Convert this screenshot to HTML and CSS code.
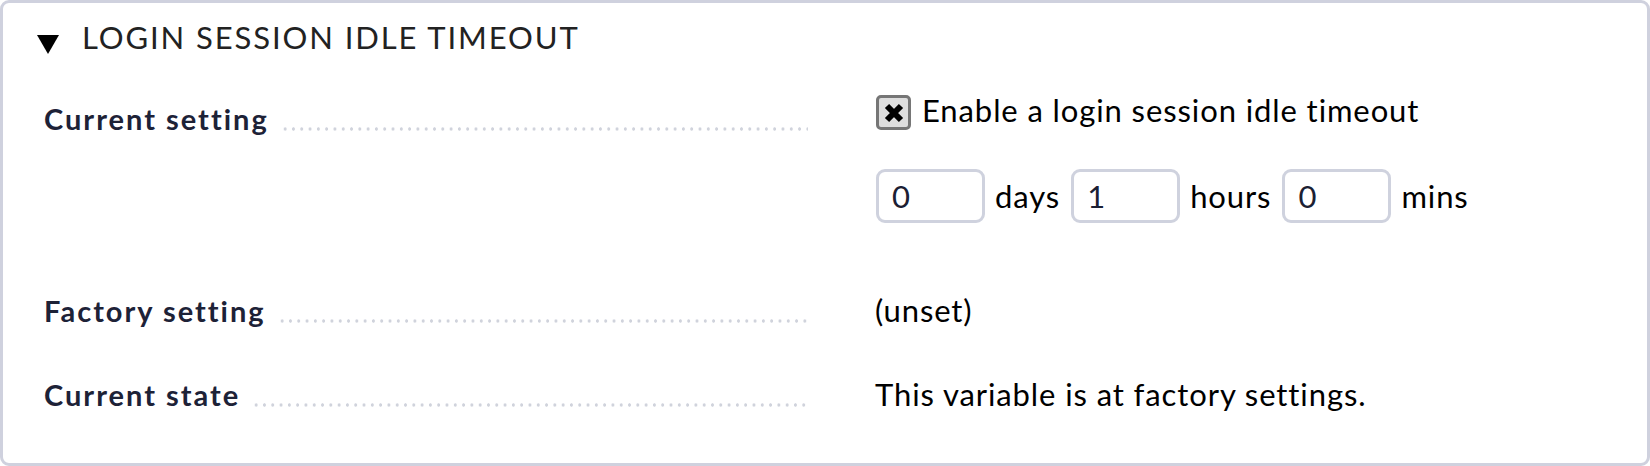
FILE: index.html
```html
<!DOCTYPE html>
<html lang="en">
<head>
<meta charset="utf-8">
<title>Login session idle timeout</title>
<link rel="stylesheet" href="styles.css">
</head>
<body>
<div class="box">
  <div class="head">
    <span class="tri"></span>
    <h2 class="title">LOGIN SESSION IDLE TIMEOUT</h2>
  </div>
  <div class="row row-current">
    <div class="label"><span class="ltext">Current setting</span><span class="dots"></span></div>
    <div class="value">
      <div class="check-line">
        <span class="checkbox"><svg width="22" height="22" viewBox="0 0 22 22"><path d="M4 4 L18 18 M18 4 L4 18" stroke="#000" stroke-width="6" stroke-linecap="butt"/></svg></span>
        <span class="check-text">Enable a login session idle timeout</span>
      </div>
      <div class="time-line">
        <input class="num" type="text" value="0"><span class="unit">days</span>
        <input class="num" type="text" value="1"><span class="unit">hours</span>
        <input class="num" type="text" value="0"><span class="unit">mins</span>
      </div>
    </div>
  </div>
  <div class="row row-factory">
    <div class="label"><span class="ltext">Factory setting</span><span class="dots"></span></div>
    <div class="value">(unset)</div>
  </div>
  <div class="row row-state">
    <div class="label"><span class="ltext">Current state</span><span class="dots"></span></div>
    <div class="value">This variable is at factory settings.</div>
  </div>
</div>
</body>
</html>
```
FILE: styles.css
```css
html, body {
  margin: 0;
  padding: 0;
  background: #fff;
}
body {
  font-family: Lato, "Open Sans", sans-serif;
  width: 1650px;
  height: 466px;
}
.box {
  box-sizing: border-box;
  width: 1650px;
  height: 466px;
  border: 3px solid #cfd1de;
  border-radius: 9px;
  background: #fff;
  padding: 16px 0 0 34px;
}
.head {
  display: flex;
  align-items: flex-start;
  height: 36px;
}
.tri {
  width: 0;
  height: 0;
  border-left: 11px solid transparent;
  border-right: 11px solid transparent;
  border-top: 19px solid #000;
  margin-top: 16px;
}
.title {
  margin: 0 0 0 23px;
  font-weight: 400;
  font-size: 31px;
  letter-spacing: 1.9px;
  color: #222;
  line-height: 36px;
}
.row {
  display: flex;
  align-items: flex-start;
}
.label {
  width: 764px;
  display: flex;
  align-items: baseline;
  padding-left: 7px;
  margin-right: 67px;
  font-weight: 700;
  font-size: 29px;
  letter-spacing: 2px;
  color: #1d2237;
  line-height: 34px;
}
.ltext {
  white-space: nowrap;
}
.dots {
  flex: 1;
  height: 4px;
  margin-left: 12px;
  background-image: radial-gradient(circle, #d0d3dc 1.4px, transparent 1.9px);
  background-size: 8.3px 4px;
  background-repeat: repeat-x;
  align-self: flex-end;
  margin-bottom: 5px;
}
.value {
  font-size: 31px;
  letter-spacing: 0.9px;
  color: #000;
  line-height: 34px;
}
.row-current {
  margin-top: 43px;
}
.row-current .label {
  margin-top: 4px;
}
.check-line {
  display: flex;
  align-items: flex-start;
}
.checkbox {
  box-sizing: border-box;
  width: 35px;
  height: 35px;
  border: 3px solid #767676;
  border-radius: 5px;
  background: #dedede;
  display: flex;
  align-items: center;
  justify-content: center;
  margin: -3px 11px 0 1px;
}
.check-text {
  line-height: 35px;
  margin-top: -5px;
}
.time-line {
  display: flex;
  align-items: center;
  margin-top: 39px;
}
.num {
  box-sizing: border-box;
  width: 109px;
  height: 54px;
  border: 3px solid #cfd2de;
  border-radius: 9px;
  padding: 0 0 0 13px;
  font-family: Lato, sans-serif;
  font-size: 31px;
  color: #1b2033;
  background: #fff;
  margin: 0 10px 0 1px;
  outline: none;
}
.unit {
  margin-right: 10px;
}
.row-factory {
  margin-top: 70px;
  align-items: baseline;
}
.row-state {
  margin-top: 49px;
  align-items: baseline;
}
```
